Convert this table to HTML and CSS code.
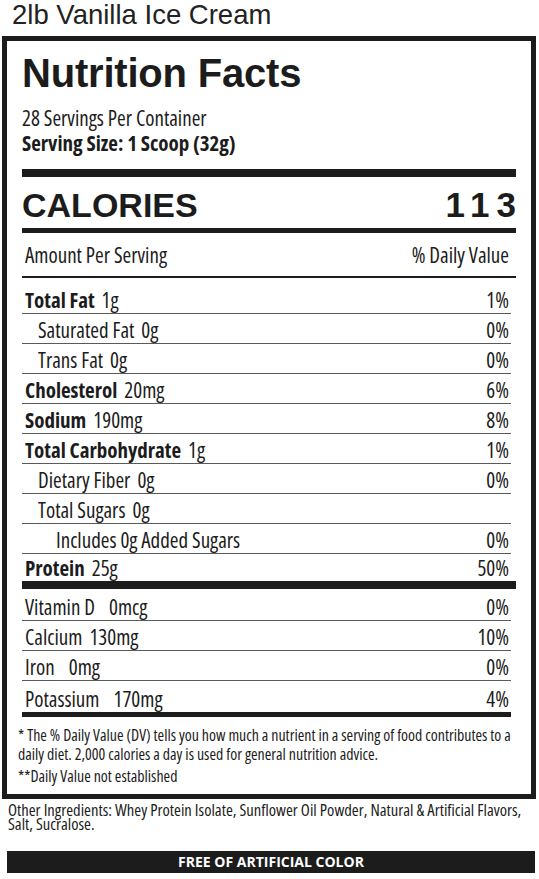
FILE: index.html
```html
<!DOCTYPE html>
<html lang="en">
<head>
    <meta charset="UTF-8">
    <meta name="viewport" content="width=device-width, initial-scale=1.0">
    <title>2lb Vanilla Ice Cream - Nutrition Facts</title>
    <link rel="stylesheet" href="styles.css">
</head>
<body>
    <h1 class="product">2lb Vanilla Ice Cream</h1>

    <div class="label">
        <div class="facts-title">Nutrition Facts</div>
        <div class="servings">28 Servings Per Container</div>
        <div class="serving-size">Serving Size: 1 Scoop (32g)</div>

        <div class="bar thick"></div>
        <div class="calories">
            <span>CALORIES</span>
            <span class="cal-num">113</span>
        </div>
        <div class="bar medium"></div>

        <div class="amount-head">
            <span>Amount Per Serving</span>
            <span>% Daily Value</span>
        </div>
        <div class="bar thin"></div>

        <!-- nutrients -->
        <div class="row first"><span><b>Total Fat</b><i>1g</i></span><span>1%</span></div>
        <div class="row sub"><span>Saturated Fat<i>0g</i></span><span>0%</span></div>
        <div class="row sub"><span>Trans Fat<i>0g</i></span><span>0%</span></div>
        <div class="row"><span><b>Cholesterol</b><i>20mg</i></span><span>6%</span></div>
        <div class="row"><span><b>Sodium</b><i>190mg</i></span><span>8%</span></div>
        <div class="row"><span><b>Total Carbohydrate</b><i>1g</i></span><span>1%</span></div>
        <div class="row sub"><span>Dietary Fiber<i>0g</i></span><span>0%</span></div>
        <div class="row sub"><span>Total Sugars<i>0g</i></span><span></span></div>
        <div class="row sub2"><span>Includes 0g Added Sugars</span><span>0%</span></div>
        <div class="row last"><span><b>Protein</b><i>25g</i></span><span>50%</span></div>

        <div class="bar thick"></div>

        <!-- vitamins and minerals -->
        <div class="row first-vit"><span>Vitamin D<i class="wide">0mcg</i></span><span>0%</span></div>
        <div class="row"><span>Calcium<i>130mg</i></span><span>10%</span></div>
        <div class="row"><span>Iron<i class="wide">0mg</i></span><span>0%</span></div>
        <div class="row last-vit"><span>Potassium<i class="wide">170mg</i></span><span>4%</span></div>

        <div class="bar medium short"></div>

        <div class="footnote">
            <p>* The % Daily Value (DV) tells you how much a nutrient in a serving of food contributes to a<br>daily diet. 2,000 calories a day is used for general nutrition advice.</p>
            <p>**Daily Value not established</p>
        </div>
    </div>

    <p class="ingredients">Other Ingredients: Whey Protein Isolate, Sunflower Oil Powder, Natural &amp; Artificial Flavors,<br>Salt, Sucralose.</p>

    <div class="banner">FREE OF ARTIFICIAL COLOR</div>
</body>
</html>
```

FILE: styles.css
```css
body {
    margin: 0;
    background-color: #fff;
    color: #1c1c1c;
    font-family: "Open Sans", "DejaVu Sans Condensed", sans-serif;
    font-stretch: 75%;
}

.product {
    margin: 0 0 6px 12px;
    font-family: "Liberation Sans", Arial, sans-serif;
    font-stretch: normal;
    font-weight: normal;
    font-size: 27.5px;
    line-height: 30px;
    color: #222;
}

.label {
    margin: 0 3px 0 2px;
    border: 5px solid #1c1c1c;
    padding: 0 15px 8px 15px;
}

.facts-title {
    margin-top: 10px;
    font-family: "Liberation Sans", Arial, sans-serif;
    font-stretch: normal;
    font-weight: bold;
    font-size: 40px;
    line-height: 44px;
    letter-spacing: -0.2px;
}

.servings {
    margin-top: 11px;
    font-size: 21px;
    line-height: 25px;
}

.serving-size {
    font-size: 21px;
    line-height: 25px;
    font-weight: bold;
}

.bar {
    background-color: #1c1c1c;
}

.bar.thick {
    height: 8px;
}

.serving-size + .bar.thick {
    margin-top: 13px;
}

.bar.medium {
    height: 5px;
    margin-top: 5px;
}

.bar.thin {
    height: 2px;
    margin-top: 10px;
}

.bar.short {
    margin-top: 0;
    margin-right: 5px;
}

.calories {
    display: flex;
    justify-content: space-between;
    align-items: baseline;
    margin-top: 10px;
    font-family: "Liberation Sans", Arial, sans-serif;
    font-stretch: normal;
    font-weight: bold;
    font-size: 34px;
    line-height: 36px;
}

.cal-num {
    font-size: 35px;
    letter-spacing: 7px;
    margin-right: -7px;
}

.amount-head {
    display: flex;
    justify-content: space-between;
    margin-top: 11px;
    padding: 0 7px 0 3px;
    font-size: 21px;
    line-height: 22px;
}

.row {
    display: flex;
    justify-content: space-between;
    align-items: flex-end;
    height: 27px;
    margin-right: 5px;
    padding: 0 2px 2px 3px;
    border-bottom: 1px solid #5a5a5a;
    font-size: 21px;
    line-height: 22px;
}

.row b {
    font-weight: bold;
}

.row i {
    font-style: normal;
    margin-left: 7px;
}

.row i.wide {
    margin-left: 14px;
}

.row.first {
    height: 33px;
}

.row.sub {
    padding-left: 16px;
}

.row.sub2 {
    padding-left: 34px;
}

.row.last {
    border-bottom: none;
    height: 25px;
}

.row.first-vit {
    height: 29px;
}

.row.last-vit {
    border-bottom: none;
    height: 29px;
}

.footnote {
    margin-left: -4px;
    padding-top: 9px;
    font-size: 15.9px;
    line-height: 19px;
}

.footnote p {
    margin: 0;
    white-space: nowrap;
}

.footnote p + p {
    margin-top: 3px;
}

.ingredients {
    margin: 4px 0 0 8px;
    font-size: 16.6px;
    line-height: 14px;
    white-space: nowrap;
}

.banner {
    margin: 20px 4px 0 7px;
    height: 22px;
    background-color: #1c1c1c;
    color: #fff;
    font-stretch: 100%;
    font-weight: bold;
    font-size: 14px;
    line-height: 22px;
    text-align: center;
}
```
